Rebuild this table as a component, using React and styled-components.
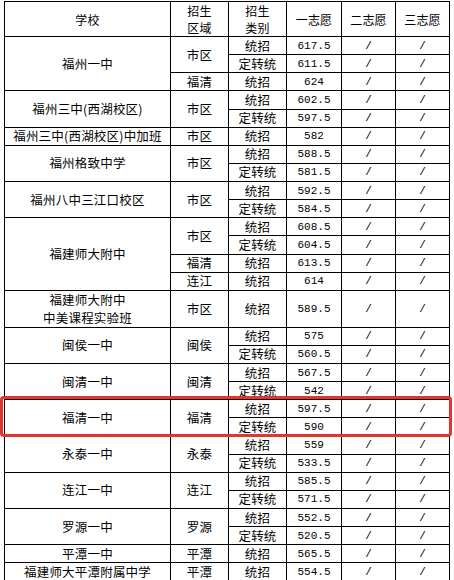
import React from 'react';
import styled, { createGlobalStyle } from 'styled-components';

const GlobalStyle = createGlobalStyle`
  html, body {
    margin: 0;
    padding: 0;
    background: #fff;
  }
  body {
    width: 454px;
    height: 580px;
    overflow: hidden;
    font-family: "Noto Sans CJK SC", "Noto Sans", sans-serif;
    color: #000;
  }
`;

const Sheet = styled.div`
  position: relative;
  padding: 1px 0 0 4px;
`;

const Table = styled.table`
  border-collapse: collapse;
  table-layout: fixed;
  width: 445px;
`;

const HeadRow = styled.tr`
  height: 35px;
`;

const Row = styled.tr`
  height: ${(p) => (p.$tall ? '34px' : '18.14px')};
`;

const Cell = styled.td`
  border: 1px solid #000;
  padding: 0;
  text-align: center;
  vertical-align: middle;
  font-size: 12.5px;
  letter-spacing: 0.2px;
  line-height: ${(p) => (p.$lh ? p.$lh : '16px')};
  white-space: nowrap;
  overflow: hidden;
`;

const HeadCell = styled(Cell).attrs({ as: 'th' })`
  font-weight: normal;
  font-size: 12px;
  line-height: 17px;
`;

const NumCell = styled(Cell)`
  font-family: "Liberation Mono", "DejaVu Sans Mono", monospace;
  font-size: 11px;
  letter-spacing: 0;
`;

const Mark = styled.div`
  position: absolute;
  left: 0;
  top: 396px;
  width: 452px;
  height: 41px;
  box-sizing: border-box;
  border: 3px solid #e33530;
  border-radius: 4px;
  pointer-events: none;
`;

const schools = [
  { name: '福州一中', regions: [{ name: '市区', rows: [['统招', '617.5'], ['定转统', '611.5']] }, { name: '福清', rows: [['统招', '624']] }] },
  { name: '福州三中(西湖校区)', regions: [{ name: '市区', rows: [['统招', '602.5'], ['定转统', '597.5']] }] },
  { name: '福州三中(西湖校区)中加班', regions: [{ name: '市区', rows: [['统招', '582']] }] },
  { name: '福州格致中学', regions: [{ name: '市区', rows: [['统招', '588.5'], ['定转统', '581.5']] }] },
  { name: '福州八中三江口校区', regions: [{ name: '市区', rows: [['统招', '592.5'], ['定转统', '584.5']] }] },
  {
    name: '福建师大附中',
    regions: [
      { name: '市区', rows: [['统招', '608.5'], ['定转统', '604.5']] },
      { name: '福清', rows: [['统招', '613.5']] },
      { name: '连江', rows: [['统招', '614']] },
    ],
  },
  { name: ['福建师大附中', '中美课程实验班'], tall: true, regions: [{ name: '市区', rows: [['统招', '589.5']] }] },
  { name: '闽侯一中', regions: [{ name: '闽侯', rows: [['统招', '575'], ['定转统', '560.5']] }] },
  { name: '闽清一中', regions: [{ name: '闽清', rows: [['统招', '567.5'], ['定转统', '542']] }] },
  { name: '福清一中', regions: [{ name: '福清', rows: [['统招', '597.5'], ['定转统', '590']] }] },
  { name: '永泰一中', regions: [{ name: '永泰', rows: [['统招', '559'], ['定转统', '533.5']] }] },
  { name: '连江一中', regions: [{ name: '连江', rows: [['统招', '585.5'], ['定转统', '571.5']] }] },
  { name: '罗源一中', regions: [{ name: '罗源', rows: [['统招', '552.5'], ['定转统', '520.5']] }] },
  { name: '平潭一中', regions: [{ name: '平潭', rows: [['统招', '565.5']] }] },
  { name: '福建师大平潭附属中学', regions: [{ name: '平潭', rows: [['统招', '554.5']] }] },
];

const SchoolName = ({ name }) =>
  Array.isArray(name) ? (
    <>
      {name[0]}
      <br />
      {name[1]}
    </>
  ) : (
    name
  );

const buildRows = () => {
  const out = [];
  schools.forEach((school, si) => {
    const total = school.regions.reduce((n, r) => n + r.rows.length, 0);
    let first = true;
    school.regions.forEach((region, ri) => {
      region.rows.forEach(([type, score], k) => {
        out.push(
          <Row key={`${si}-${ri}-${k}`} $tall={school.tall}>
            {first && (
              <Cell rowSpan={total} $lh={school.tall ? '18px' : null}>
                <SchoolName name={school.name} />
              </Cell>
            )}
            {k === 0 && <Cell rowSpan={region.rows.length}>{region.name}</Cell>}
            <Cell>{type}</Cell>
            <NumCell>{score}</NumCell>
            <NumCell>/</NumCell>
            <NumCell>/</NumCell>
          </Row>
        );
        first = false;
      });
    });
  });
  return out;
};

const App = () => {
  return (
    <>
      <GlobalStyle />
      <Sheet>
        <Table>
          <colgroup>
            <col style={{ width: 166 }} />
            <col style={{ width: 58 }} />
            <col style={{ width: 58 }} />
            <col style={{ width: 55 }} />
            <col style={{ width: 54 }} />
            <col style={{ width: 54 }} />
          </colgroup>
          <thead>
            <HeadRow>
              <HeadCell>学校</HeadCell>
              <HeadCell>招生<br />区域</HeadCell>
              <HeadCell>招生<br />类别</HeadCell>
              <HeadCell>一志愿</HeadCell>
              <HeadCell>二志愿</HeadCell>
              <HeadCell>三志愿</HeadCell>
            </HeadRow>
          </thead>
          <tbody>{buildRows()}</tbody>
        </Table>
        <Mark />
      </Sheet>
    </>
  );
};

export default App;
